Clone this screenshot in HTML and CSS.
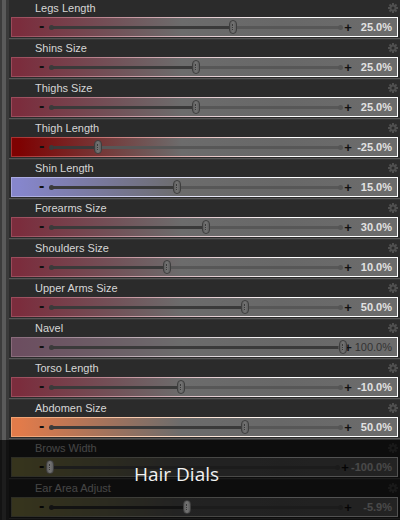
FILE: index.html
```html
<!DOCTYPE html>
<html lang="en">
<head>
<meta charset="UTF-8" />
<meta name="viewport" content="width=device-width, initial-scale=1" />
<title>Body Dials</title>
<link rel="stylesheet" href="styles.css">
</head>
<body>

<svg class="defs" width="0" height="0">
  <symbol id="gear" viewBox="0 0 10 10">
    <g fill="#4f4f4f">
      <circle cx="5" cy="5" r="3.5" />
      <rect x="4" y="0" width="2" height="10" />
      <rect x="0" y="4" width="10" height="2" />
      <rect x="4" y="0" width="2" height="10" transform="rotate(45 5 5)" />
      <rect x="4" y="0" width="2" height="10" transform="rotate(-45 5 5)" />
    </g>
    <circle cx="5" cy="5" r="1.5" fill="#2b2b2b" />
  </symbol>
</svg>

<div class="dials">

  <div class="dial">
    <div class="dial-head"><span class="dial-name">Legs Length</span><svg class="gear"><use href="#gear" /></svg></div>
    <div class="dial-bar crimson">
      <span class="minus">-</span>
      <div class="track"><div class="fill" style="width:183px"></div><div class="thumb" style="left:183px"></div></div>
      <span class="plus">+</span>
      <span class="value">25.0%</span>
    </div>
  </div>

  <div class="dial">
    <div class="dial-head"><span class="dial-name">Shins Size</span><svg class="gear"><use href="#gear" /></svg></div>
    <div class="dial-bar crimson">
      <span class="minus">-</span>
      <div class="track"><div class="fill" style="width:146px"></div><div class="thumb" style="left:146px"></div></div>
      <span class="plus">+</span>
      <span class="value">25.0%</span>
    </div>
  </div>

  <div class="dial">
    <div class="dial-head"><span class="dial-name">Thighs Size</span><svg class="gear"><use href="#gear" /></svg></div>
    <div class="dial-bar crimson">
      <span class="minus">-</span>
      <div class="track"><div class="fill" style="width:146px"></div><div class="thumb" style="left:146px"></div></div>
      <span class="plus">+</span>
      <span class="value">25.0%</span>
    </div>
  </div>

  <div class="dial">
    <div class="dial-head"><span class="dial-name">Thigh Length</span><svg class="gear"><use href="#gear" /></svg></div>
    <div class="dial-bar red">
      <span class="minus">-</span>
      <div class="track"><div class="fill" style="width:48px"></div><div class="thumb" style="left:48px"></div></div>
      <span class="plus">+</span>
      <span class="value">-25.0%</span>
    </div>
  </div>

  <div class="dial">
    <div class="dial-head"><span class="dial-name">Shin Length</span><svg class="gear"><use href="#gear" /></svg></div>
    <div class="dial-bar lavender">
      <span class="minus">-</span>
      <div class="track"><div class="fill" style="width:127px"></div><div class="thumb" style="left:127px"></div></div>
      <span class="plus">+</span>
      <span class="value">15.0%</span>
    </div>
  </div>

  <div class="dial">
    <div class="dial-head"><span class="dial-name">Forearms Size</span><svg class="gear"><use href="#gear" /></svg></div>
    <div class="dial-bar crimson">
      <span class="minus">-</span>
      <div class="track"><div class="fill" style="width:156px"></div><div class="thumb" style="left:156px"></div></div>
      <span class="plus">+</span>
      <span class="value">30.0%</span>
    </div>
  </div>

  <div class="dial">
    <div class="dial-head"><span class="dial-name">Shoulders Size</span><svg class="gear"><use href="#gear" /></svg></div>
    <div class="dial-bar crimson">
      <span class="minus">-</span>
      <div class="track"><div class="fill" style="width:117px"></div><div class="thumb" style="left:117px"></div></div>
      <span class="plus">+</span>
      <span class="value">10.0%</span>
    </div>
  </div>

  <div class="dial">
    <div class="dial-head"><span class="dial-name">Upper Arms Size</span><svg class="gear"><use href="#gear" /></svg></div>
    <div class="dial-bar crimson">
      <span class="minus">-</span>
      <div class="track"><div class="fill" style="width:195px"></div><div class="thumb" style="left:195px"></div></div>
      <span class="plus">+</span>
      <span class="value">50.0%</span>
    </div>
  </div>

  <div class="dial">
    <div class="dial-head"><span class="dial-name">Navel</span><svg class="gear"><use href="#gear" /></svg></div>
    <div class="dial-bar mauve maxed">
      <span class="minus">-</span>
      <div class="track"><div class="fill" style="width:293px"></div><div class="thumb" style="left:293px"></div></div>
      <span class="plus">+</span>
      <span class="value">100.0%</span>
    </div>
  </div>

  <div class="dial">
    <div class="dial-head"><span class="dial-name">Torso Length</span><svg class="gear"><use href="#gear" /></svg></div>
    <div class="dial-bar crimson">
      <span class="minus">-</span>
      <div class="track"><div class="fill" style="width:131px"></div><div class="thumb" style="left:131px"></div></div>
      <span class="plus">+</span>
      <span class="value">-10.0%</span>
    </div>
  </div>

  <div class="dial">
    <div class="dial-head"><span class="dial-name">Abdomen Size</span><svg class="gear"><use href="#gear" /></svg></div>
    <div class="dial-bar orange">
      <span class="minus">-</span>
      <div class="track"><div class="fill" style="width:195px"></div><div class="thumb" style="left:195px"></div></div>
      <span class="plus">+</span>
      <span class="value">50.0%</span>
    </div>
  </div>

  <div class="dimmed">
    <div class="dial">
      <div class="dial-head"><span class="dial-name">Brows Width</span><svg class="gear"><use href="#gear" /></svg></div>
      <div class="dial-bar olive">
        <span class="minus">-</span>
        <div class="track"><div class="fill" style="width:0px"></div><div class="thumb" style="left:0px"></div></div>
        <span class="plus">+</span>
        <span class="value">-100.0%</span>
      </div>
    </div>

    <div class="dial">
      <div class="dial-head"><span class="dial-name">Ear Area Adjust</span><svg class="gear"><use href="#gear" /></svg></div>
      <div class="dial-bar olive">
        <span class="minus">-</span>
        <div class="track"><div class="fill" style="width:137px"></div><div class="thumb" style="left:137px"></div></div>
        <span class="plus">+</span>
        <span class="value">-5.9%</span>
      </div>
    </div>

    <div class="group-label">Hair Dials</div>
  </div>

</div>

</body>
</html>
```

FILE: styles.css
```css
body {
  margin: 0;
  background: #2b2b2b;
  font-family: "Liberation Sans", Arial, sans-serif;
  overflow: hidden;
}
.defs {
  position: absolute;
}
.dials {
  width: 400px;
}
.dial {
  height: 40px;
  box-sizing: border-box;
  padding: 0 2px 0 11px;
  background:
    linear-gradient(to right, #3c3c3c 0 2px, #5a5a5a 2px 6px, #3a3a3a 6px 9px, transparent 9px),
    linear-gradient(to bottom, #2b2b2b 0 38px, #565656 38px 39px, #363636 39px);
}
.dial-head {
  height: 17px;
  display: flex;
  align-items: center;
  justify-content: space-between;
  padding-left: 24px;
}
.dial-name {
  font-size: 11px;
  color: #d6d6d6;
  margin-top: -1px;
}
.gear {
  width: 10px;
  height: 10px;
  margin-top: -1px;
}

/* slider bar */
.dial-bar {
  --tint: #7b2d3d;
  --edge: #9a4a5a;
  height: 20px;
  box-sizing: border-box;
  border: 1px solid;
  border-image: linear-gradient(to right, var(--edge), #fff 72%) 1;
  background: linear-gradient(to right, var(--tint) 2%, #6c6c6c 44%, #686868 70%, #6c6c6c);
  display: flex;
  align-items: center;
  padding-left: 27px;
}
.dial-bar.red { --tint: #7e0202; --edge: #a83030; }
.dial-bar.lavender { --tint: #8686cc; --edge: #a8a8e0; }
.dial-bar.mauve { --tint: #6c4e60; --edge: #886a7a; }
.dial-bar.orange { --tint: #e27b4a; --edge: #f0a070; }
.dial-bar.olive { --tint: #a8a25a; --edge: #8a8a70; }

.minus,
.plus {
  font-weight: bold;
  color: #111;
  line-height: 1;
}
.minus {
  width: 11px;
  font-size: 16px;
  margin-top: -3px;
}
.plus {
  width: 12px;
  font-size: 13px;
  text-align: center;
}
.track {
  position: relative;
  width: 292px;
  height: 3px;
  background: #575757;
  border-radius: 2px;
}
.track::after {
  content: "";
  position: absolute;
  right: -1px;
  top: -1px;
  width: 5px;
  height: 5px;
  border-radius: 50%;
  background: #555;
}
.fill {
  height: 3px;
  background: #3a3a3a;
  border-radius: 2px;
}
.fill::before {
  content: "";
  position: absolute;
  left: -1px;
  top: -1px;
  width: 5px;
  height: 5px;
  border-radius: 50%;
  background: #3a3a3a;
}
.thumb {
  position: absolute;
  top: -6px;
  width: 8px;
  height: 14px;
  margin-left: -4px;
  box-sizing: border-box;
  border: 1px solid #3e3e3e;
  border-radius: 4px;
  background: linear-gradient(to right, #5e5e5e, #747474 50%, #5e5e5e);
  z-index: 1;
}
.thumb::after {
  content: "";
  position: absolute;
  left: 2px;
  top: 3px;
  height: 6px;
  border-left: 1px dotted #3a3a3a;
}
.value {
  flex: 1;
  text-align: right;
  padding-right: 5px;
  font-size: 11px;
  font-weight: bold;
  color: #e2e2e2;
}
.maxed .value {
  font-weight: normal;
  color: #333;
}

/* disabled group */
.dimmed {
  position: relative;
}
.dimmed::after {
  content: "";
  position: absolute;
  inset: 0;
  background: rgba(0, 0, 0, 0.68);
}
.group-label {
  position: absolute;
  left: 134px;
  top: 25px;
  font-family: "Open Sans", sans-serif;
  font-size: 19px;
  line-height: 19px;
  color: #f2f2f2;
  z-index: 2;
}
```
